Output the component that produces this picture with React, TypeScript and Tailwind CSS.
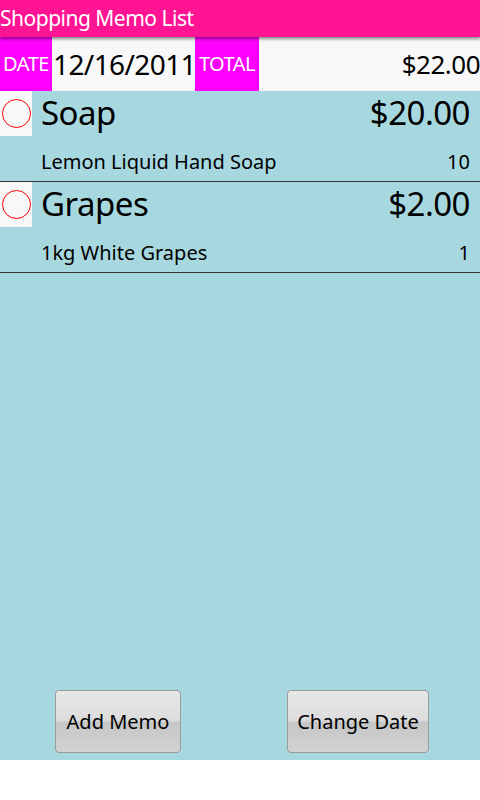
const items = [
  { name: "Soap", price: "$20.00", desc: "Lemon Liquid Hand Soap", qty: "10" },
  { name: "Grapes", price: "$2.00", desc: "1kg White Grapes", qty: "1" },
];

function Check() {
  return (
    <div className="flex h-[45px] w-[32px] shrink-0 items-center justify-center bg-[#f8f8f8]">
      <div className="h-[29px] w-[29px] rounded-full border border-[#ff0000]" />
    </div>
  );
}

function MemoRow({ item }: { item: (typeof items)[number] }) {
  return (
    <div className="border-b border-[#333]">
      <div className="flex h-[45px] items-center">
        <Check />
        <div className="ml-[9px] mt-[-2px] text-[33px] leading-none tracking-[-0.5px] text-black">{item.name}</div>
        <div className="ml-auto mr-[10px] mt-[-2px] text-[33px] leading-none tracking-[-0.5px] text-black">{item.price}</div>
      </div>
      <div className="flex h-[45px] items-center pl-[41px] pr-[10px] pt-[7px] text-[20px] text-black">
        <div>{item.desc}</div>
        <div className="ml-auto">{item.qty}</div>
      </div>
    </div>
  );
}

export default function App() {
  return (
    <div className="h-[800px] w-[480px] bg-white" style={{ fontFamily: '"Noto Sans", "Open Sans", sans-serif' }}>
      <div className="flex h-[760px] flex-col bg-[#a8d8df]">
        <div className="relative z-10 flex h-[37px] items-center bg-[#ff1493] text-[21px] tracking-[-0.5px] text-white shadow-[0_2px_3px_rgba(0,0,0,0.45)]">
          Shopping Memo List
        </div>
        <div className="flex h-[54px] items-center bg-[#f8f8f8]">
          <div className="flex h-full w-[52px] items-center justify-center bg-[#ff00ff] text-[20px] tracking-[-0.5px] text-white">DATE</div>
          <div className="flex h-full w-[143px] items-center justify-center pl-[2px] text-[28px] tracking-[-0.6px] text-black">12/16/2011</div>
          <div className="flex h-full w-[64px] items-center justify-center bg-[#ff00ff] text-[20px] tracking-[-0.5px] text-white">TOTAL</div>
          <div className="ml-auto text-[26px] tracking-[-0.5px] text-black">$22.00</div>
        </div>
        {items.map((it) => (
          <MemoRow key={it.name} item={it} />
        ))}
        <div className="mt-auto mb-[7px] flex items-center">
          <button className="ml-[55px] h-[63px] w-[126px] rounded-[4px] border border-[#9a9a9a] bg-[linear-gradient(#e8e8e8_0%,#dcdcdc_48%,#c6c6c6_52%,#d2d2d2_100%)] text-[20px] text-black">
            Add Memo
          </button>
          <button className="ml-[106px] h-[63px] w-[142px] rounded-[4px] border border-[#9a9a9a] bg-[linear-gradient(#e8e8e8_0%,#dcdcdc_48%,#c6c6c6_52%,#d2d2d2_100%)] text-[20px] text-black">
            Change Date
          </button>
        </div>
      </div>
    </div>
  );
}
